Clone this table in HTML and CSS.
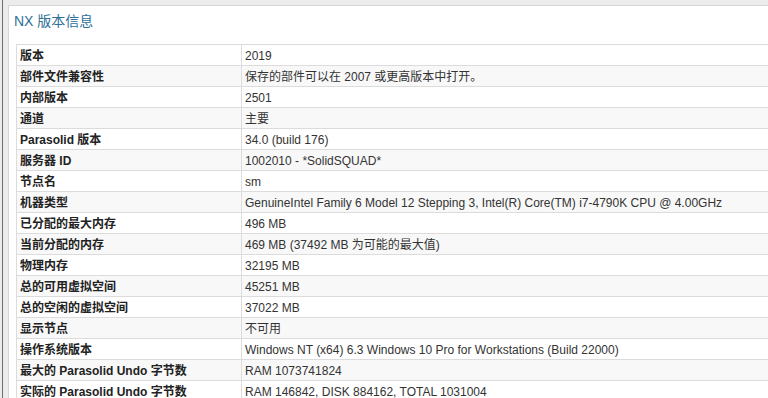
FILE: index.html
```html
<!DOCTYPE html>
<html lang="zh">
<head>
<meta charset="utf-8">
<title>NX 版本信息</title>
<link rel="stylesheet" href="styles.css">
</head>
<body>
<div class="frame">
  <div class="inner">
    <div class="panel">
      <h1 class="title">NX 版本信息</h1>
      <table class="info">
        <colgroup><col class="c1"><col class="c2"></colgroup>
        <tbody>
          <tr><th>版本</th><td>2019</td></tr>
          <tr><th>部件文件兼容性</th><td>保存的部件可以在 2007 或更高版本中打开。</td></tr>
          <tr><th>内部版本</th><td>2501</td></tr>
          <tr><th>通道</th><td>主要</td></tr>
          <tr><th>Parasolid 版本</th><td>34.0 (build 176)</td></tr>
          <tr><th>服务器 ID</th><td>1002010 - *SolidSQUAD*</td></tr>
          <tr><th>节点名</th><td>sm</td></tr>
          <tr><th>机器类型</th><td>GenuineIntel Family 6 Model 12 Stepping 3, Intel(R) Core(TM) i7-4790K CPU @ 4.00GHz</td></tr>
          <tr><th>已分配的最大内存</th><td>496 MB</td></tr>
          <tr><th>当前分配的内存</th><td>469 MB (37492 MB 为可能的最大值)</td></tr>
          <tr><th>物理内存</th><td>32195 MB</td></tr>
          <tr><th>总的可用虚拟空间</th><td>45251 MB</td></tr>
          <tr><th>总的空闲的虚拟空间</th><td>37022 MB</td></tr>
          <tr><th>显示节点</th><td>不可用</td></tr>
          <tr><th>操作系统版本</th><td>Windows NT (x64) 6.3 Windows 10 Pro for Workstations (Build 22000)</td></tr>
          <tr><th>最大的 Parasolid Undo 字节数</th><td>RAM 1073741824</td></tr>
          <tr><th>实际的 Parasolid Undo 字节数</th><td>RAM 146842, DISK 884162, TOTAL 1031004</td></tr>
        </tbody>
      </table>
    </div>
  </div>
</div>
</body>
</html>
```
FILE: styles.css
```css
html, body {
  margin: 0;
  padding: 0;
  height: 100%;
  overflow: hidden;
  background: #ececec;
  font-family: "Liberation Sans", Arial, "Noto Sans CJK SC", sans-serif;
  color: #333333;
}

.frame {
  height: 100%;
  padding-left: 2px;
  box-sizing: border-box;
}

.inner {
  height: 100%;
  border-left: 1px solid #6e6e6e;
  padding: 5px 0 0 5px;
  box-sizing: border-box;
}

.panel {
  height: 100%;
  background: #ffffff;
  border-top: 1px solid #d6d6d6;
  border-left: 1px solid #d6d6d6;
  box-sizing: border-box;
  overflow: hidden;
  padding: 5px 0 0 7px;
}

.title {
  margin: 0 0 0 -2px;
  font-size: 14px;
  font-weight: normal;
  line-height: 20px;
  color: #2f6f98;
  height: 33px;
}

.info {
  border-collapse: collapse;
  width: 820px;
  table-layout: fixed;
  font-size: 12px;
  line-height: 18px;
}

.c1 { width: 225px; }

.info th,
.info td {
  border: 1px solid #dcdcdc;
  padding: 2px 3px 0;
  text-align: left;
  white-space: nowrap;
  overflow: hidden;
  height: 18px;
  color: #333333;
}

.info th {
  font-weight: bold;
  color: #222222;
}

.info td {
  font-weight: normal;
}

.info tr:nth-child(even) th,
.info tr:nth-child(even) td {
  background: #f8f8f8;
}
```
